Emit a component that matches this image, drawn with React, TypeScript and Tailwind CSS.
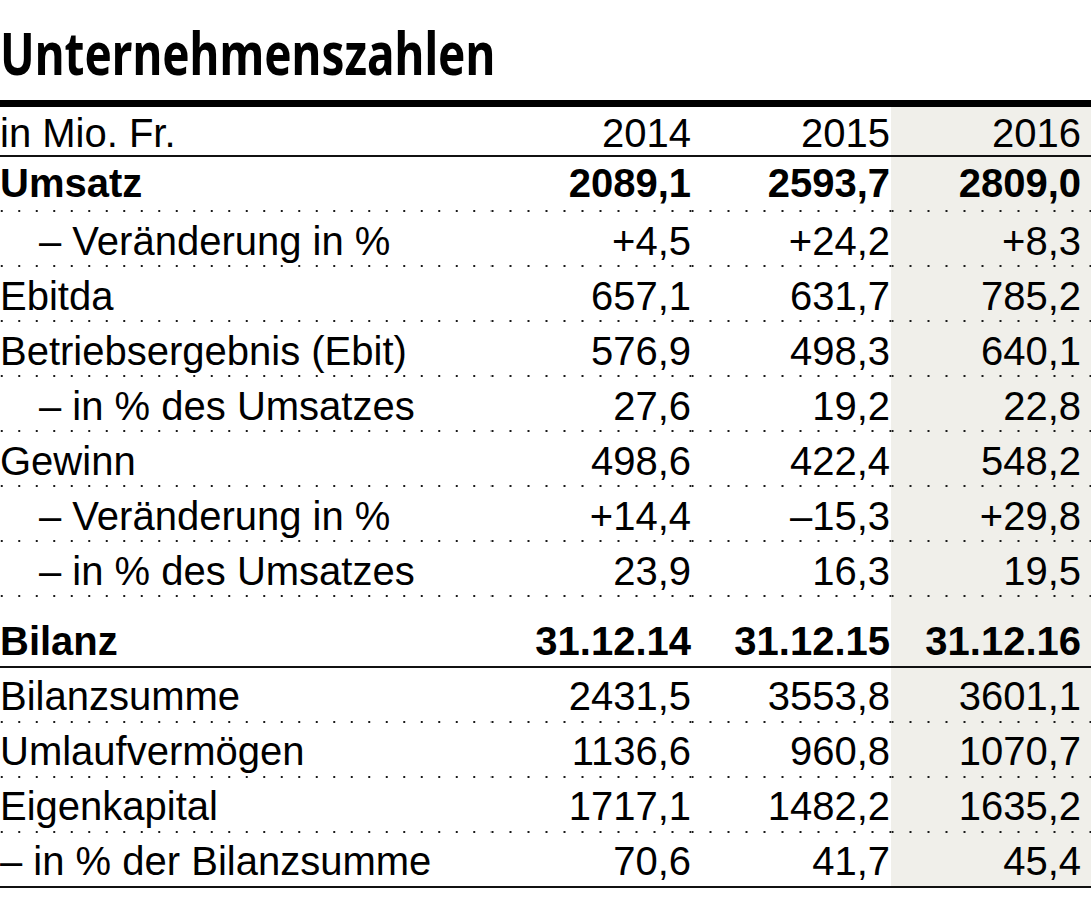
import React from "react";

type Row = {
  label: string;
  v: [string, string, string];
  bold?: boolean;
  indent?: boolean;
};

const top: Row[] = [
  { label: "Umsatz", v: ["2089,1", "2593,7", "2809,0"], bold: true },
  { label: "– Veränderung in %", v: ["+4,5", "+24,2", "+8,3"], indent: true },
  { label: "Ebitda", v: ["657,1", "631,7", "785,2"] },
  { label: "Betriebsergebnis (Ebit)", v: ["576,9", "498,3", "640,1"] },
  { label: "– in % des Umsatzes", v: ["27,6", "19,2", "22,8"], indent: true },
  { label: "Gewinn", v: ["498,6", "422,4", "548,2"] },
  { label: "– Veränderung in %", v: ["+14,4", "–15,3", "+29,8"], indent: true },
  { label: "– in % des Umsatzes", v: ["23,9", "16,3", "19,5"], indent: true },
];

const bottom: Row[] = [
  { label: "Bilanzsumme", v: ["2431,5", "3553,8", "3601,1"] },
  { label: "Umlaufvermögen", v: ["1136,6", "960,8", "1070,7"] },
  { label: "Eigenkapital", v: ["1717,1", "1482,2", "1635,2"] },
];

const DOT_L =
  "bg-[radial-gradient(circle,#1a1a1a_0.9px,transparent_1.4px)] bg-[length:17.5px_2px] bg-[position:-7px_100%] bg-repeat-x";
const DOT_N =
  "bg-[radial-gradient(circle,#1a1a1a_0.9px,transparent_1.4px)] bg-[length:18px_2px] bg-[position:-7.5px_100%] bg-repeat-x";

function DataRow({ r, pt }: { r: Row; pt: string }) {
  const w = r.bold ? "font-bold" : "font-normal";
  return (
    <div className="grid h-[55px] grid-cols-[1fr_200px_200px_200px]">
      <div className={`${DOT_L} ${pt} ${w} whitespace-nowrap ${r.indent ? "pl-[39px]" : "pl-0"}`}>{r.label}</div>
      <div className={`${DOT_N} ${pt} ${w} text-right`}>{r.v[0]}</div>
      <div className={`${DOT_N} ${pt} ${w} pr-[1px] text-right`}>{r.v[1]}</div>
      <div className={`${DOT_N} ${pt} ${w} bg-[#f0efea] pr-[10px] text-right`}>{r.v[2]}</div>
    </div>
  );
}

export default function App() {
  return (
    <div className="w-[1091px] bg-white font-['Liberation_Sans',Arial,sans-serif] text-[40px] leading-[40px] text-black">
      <div className="h-[100px] pt-[22px]">
        <h1 className="inline-block origin-left scale-x-[0.765] whitespace-nowrap font-['Noto_Sans',sans-serif] text-[60px] font-bold leading-[60px]">
          Unternehmenszahlen
        </h1>
      </div>
      <div className="h-[7px] bg-black" />

      <div className="grid h-[50px] grid-cols-[1fr_200px_200px_200px] border-b-2 border-[#111]">
        <div className="pt-[6px]">in Mio. Fr.</div>
        <div className="pt-[6px] text-right">2014</div>
        <div className="pt-[6px] pr-[1px] text-right">2015</div>
        <div className="bg-[#f0efea] pt-[6px] pr-[10px] text-right">2016</div>
      </div>

      {top.map((r, i) => (
        <DataRow key={i} r={r} pt={i === 0 ? "pt-[6px]" : "pt-[9px]"} />
      ))}

      <div className="grid h-[71px] grid-cols-[1fr_200px_200px_200px] border-b-2 border-[#111] font-bold">
        <div className="pt-[24px]">Bilanz</div>
        <div className="pt-[24px] text-right">31.12.14</div>
        <div className="pt-[24px] pr-[1px] text-right">31.12.15</div>
        <div className="bg-[#f0efea] pt-[24px] pr-[10px] text-right">31.12.16</div>
      </div>

      {bottom.map((r, i) => (
        <DataRow key={i} r={r} pt="pt-[8px]" />
      ))}

      <div className="grid h-[55px] grid-cols-[1fr_200px_200px_200px] border-b-2 border-[#111]">
        <div className="whitespace-nowrap pt-[8px]">– in % der Bilanzsumme</div>
        <div className="pt-[8px] text-right">70,6</div>
        <div className="pt-[8px] pr-[1px] text-right">41,7</div>
        <div className="bg-[#f0efea] pt-[8px] pr-[10px] text-right">45,4</div>
      </div>
    </div>
  );
}
